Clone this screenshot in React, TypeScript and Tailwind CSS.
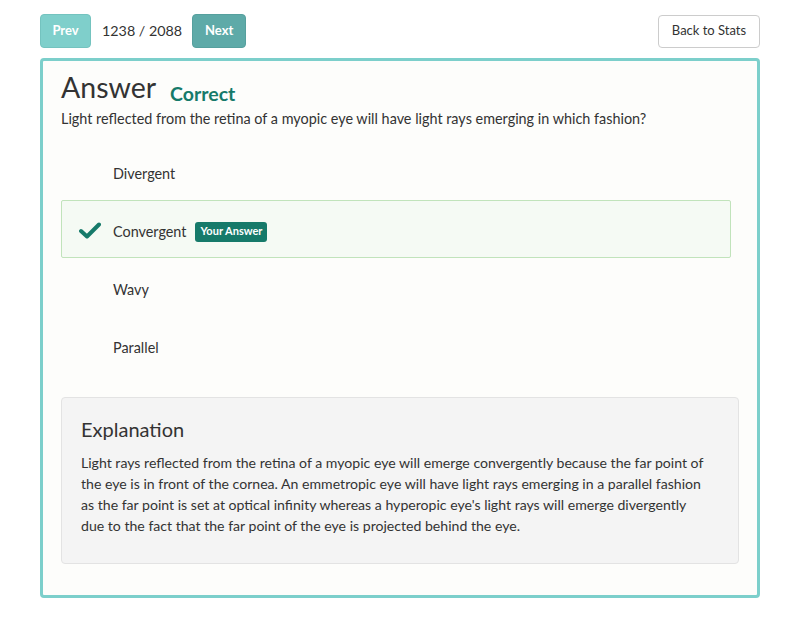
import React from "react";

const options = ["Divergent", "Convergent", "Wavy", "Parallel"];

export default function App() {
  return (
    <div className="w-[800px] h-[622px] bg-white text-[#333]" style={{ fontFamily: "Lato, 'Noto Sans', sans-serif" }}>
      <div className="pl-10 pr-10 pt-[14px]">
        <div className="flex items-center h-[34px]">
          <button className="h-[34px] w-[51px] rounded bg-[#7fcfcb] border border-[#74c3bf] text-white text-[13px] font-bold">Prev</button>
          <span className="ml-[11px] text-[14.3px] text-[#333]">1238 / 2088</span>
          <button className="ml-[10px] h-[34px] w-[54px] rounded bg-[#5eaaa8] border border-[#56a09e] text-white text-[13px] font-bold">Next</button>
          <div className="flex-1" />
          <button className="h-[33px] w-[102px] rounded border border-[#cccccc] bg-white text-[13px] text-[#333]">Back to Stats</button>
        </div>
        <div className="mt-[10px] h-[540px] rounded border-[3px] border-[#7ccfcb] bg-[#fdfdfb] pl-[18px] pr-[18px] pt-[8px]">
          <div className="flex items-end h-[36px]">
            <h1 className="text-[28.5px] leading-[36px] text-[#333]">Answer</h1>
            <span className="ml-[14px] mb-[-3px] text-[19.5px] font-bold text-[#167a6a] leading-[28px]">Correct</span>
          </div>
          <p className="mt-[4px] text-[14.4px] leading-[20px]">Light reflected from the retina of a myopic eye will have light rays emerging in which fashion?</p>
          <div className="mt-[13px] w-[670px]">
            {options.map((o) => {
              const sel = o === "Convergent";
              return (
                <div
                  key={o}
                  className={
                    sel
                      ? "h-[58px] pt-[5px] flex items-center border border-[#c1e3bb] bg-[#f5faf4] rounded-[2px]"
                      : "h-[58px] pt-[5px] flex items-center border border-transparent"
                  }
                >
                  <div className="w-[51px] flex justify-center pl-[5px] mt-[-2px]">
                    {sel && (
                      <svg width="22" height="17" viewBox="0 0 22 17">
                        <path d="M2 9 L8 14.5 L20 2.5" fill="none" stroke="#167a6a" strokeWidth="4" strokeLinecap="round" strokeLinejoin="round" />
                      </svg>
                    )}
                  </div>
                  <span className="text-[14.4px]">{o}</span>
                  {sel && (
                    <span className="ml-[9px] px-[5px] h-[20px] shrink-0 flex items-center rounded-[3px] bg-[#167a6a] text-white text-[11px] font-bold">Your Answer</span>
                  )}
                </div>
              );
            })}
          </div>
          <div className="mt-[23px] h-[167px] rounded border border-[#e3e3e3] bg-[#f4f4f4] px-[19px] pt-[18px]">
            <h2 className="text-[20px] leading-[26px] text-[#333]">Explanation</h2>
            <p className="mt-[10px] w-[628px] text-[14.1px] leading-[21px] text-[#333]">
              Light rays reflected from the retina of a myopic eye will emerge convergently because the far point of the eye is in front of the cornea. An emmetropic eye will have light rays emerging in a parallel fashion as the far point is set at optical infinity whereas a hyperopic eye's light rays will emerge divergently due to the fact that the far point of the eye is projected behind the eye.
            </p>
          </div>
        </div>
      </div>
    </div>
  );
}
